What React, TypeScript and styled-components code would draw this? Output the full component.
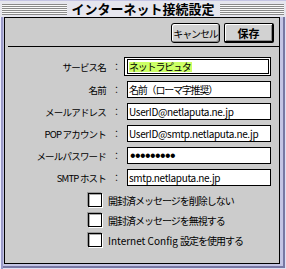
import React from "react";
import styled, { createGlobalStyle } from "styled-components";

const GlobalStyle = createGlobalStyle`
  html, body { margin: 0; padding: 0; background: #c4c4e4; }
  body { font-family: "Noto Sans CJK JP", "Noto Sans", sans-serif; color: #000; }
`;

const Window = styled.div`
  width: 286px;
  height: 269px;
  box-sizing: border-box;
  display: flex;
  flex-direction: column;
  background: #c4c4e4;
  box-shadow: inset 1px 1px 0 #ececff, inset -1px -1px 0 #e0e0f4, inset -3px -3px 0 #7878a4;
`;

const TitleBar = styled.div`
  height: 17px;
  display: flex;
  align-items: center;
  gap: 5px;
  padding: 0 2px;
  background: #e6e6ee;
  box-shadow: inset 0 1px 0 #c4c4e4;
`;

const Stripes = styled.div`
  flex: 1;
  height: 11px;
  margin-top: 2px;
  background: repeating-linear-gradient(to bottom, #8a8a8a 0 1px, #fafafa 1px 2px);
`;

const TitleText = styled.div`
  font-size: 13px;
  font-weight: 700;
  line-height: 16px;
  white-space: nowrap;
`;

const Frame = styled.div`
  flex: 1;
  display: flex;
  padding: 0 6px 5px 4px;
  box-shadow: inset 1px 0 0 #ececff, inset 3px 0 0 #9a9ac8;
`;

const Dialog = styled.div`
  flex: 1;
  display: flex;
  flex-direction: column;
  border: 1px solid #000;
  background: #cccccc;
`;

const Toolbar = styled.div`
  display: flex;
  justify-content: flex-end;
  gap: 4px;
  padding: 5px 5px 0 0;
`;

const Button = styled.div<{ $default?: boolean; $width: number }>`
  box-sizing: border-box;
  width: ${p => p.$width}px;
  height: 20px;
  display: flex;
  align-items: center;
  justify-content: center;
  background: #d2d2d2;
  border: 1px solid #000;
  border-right-width: ${p => (p.$default ? 2 : 1)}px;
  border-bottom-width: ${p => (p.$default ? 2 : 1)}px;
  border-radius: ${p => (p.$default ? 2 : 3)}px;
  box-shadow: inset 1px 1px 0 #fff, inset -1px -1px 0 #8c8c8c;
  font-size: ${p => (p.$default ? 11 : 10)}px;
  font-weight: ${p => (p.$default ? 700 : 400)};
  letter-spacing: ${p => (p.$default ? 0 : -1.1)}px;
  white-space: nowrap;
`;

const Separator = styled.div`
  height: 1px;
  background: #000;
  margin: 3px 0 0 3px;
`;

const Form = styled.div`
  display: grid;
  grid-template-columns: 101px 21px 144px;
  grid-template-rows: 19px repeat(5, 17px);
  row-gap: 5px;
  align-items: center;
  margin-top: 10px;
`;

const Label = styled.div`
  text-align: right;
  font-size: 9.5px;
  letter-spacing: -0.8px;
  white-space: nowrap;
`;

const Colon = styled.div`
  text-align: center;
  font-size: 9px;
`;

const FocusRing = styled.div`
  box-sizing: border-box;
  height: 19px;
  width: 147px;
  margin-left: -3px;
  border: 1px solid #000;
  padding: 1px 1px 1px 2px;
  background: #fff;
  display: flex;
`;

const Field = styled.div<{ $cjk?: boolean; $height?: number }>`
  box-sizing: border-box;
  flex: 1;
  height: ${p => p.$height ?? 17}px;
  border: 1px solid #000;
  background: #fff;
  padding-left: 1px;
  display: flex;
  align-items: center;
  font-size: 10px;
  letter-spacing: ${p => (p.$cjk ? -1.2 : -0.35)}px;
  white-space: nowrap;
  overflow: hidden;
`;

const Selection = styled.span`
  background: #ccff66;
  line-height: 10px;
  padding: 0 1px 0 0;
`;

const Dots = styled.span`
  font-family: "Liberation Sans", sans-serif;
  font-size: 16px;
  line-height: 14px;
  letter-spacing: -0.6px;
  margin-left: 1px;
`;

const CheckList = styled.div`
  display: flex;
  flex-direction: column;
  gap: 6px;
  margin-top: 7px;
  padding-left: 83px;
`;

const CheckRow = styled.div`
  display: flex;
  align-items: center;
  gap: 6px;
  height: 14px;
`;

const CheckBox = styled.div`
  box-sizing: border-box;
  width: 14px;
  height: 14px;
  border: 1px solid #000;
  background: #fff;
  box-shadow: inset 1px 1px 0 #aaa, 1px 1px 0 #fff, -1px -1px 0 #999;
`;

const CheckText = styled.span`
  font-size: 10px;
  letter-spacing: -1px;
  white-space: nowrap;
`;

const Latin = styled.span`
  letter-spacing: 0;
`;

type Row = { label: React.ReactNode; value: string; cjk?: boolean };

const rows: Row[] = [
  { label: "名前", value: "名前（ローマ字推奨）", cjk: true },
  { label: "メールアドレス", value: "UserID@netlaputa.ne.jp" },
  { label: "POP アカウント", value: "UserID@smtp.netlaputa.ne.jp" },
  { label: "メールパスワード", value: "" },
  { label: "SMTP ホスト", value: "smtp.netlaputa.ne.jp" },
];

const checks: React.ReactNode[] = [
  "開封済メッセージを削除しない",
  "開封済メッセージを無視する",
  <><Latin>Internet Config </Latin>設定を使用する</>,
];

export default function App() {
  return (
    <>
      <GlobalStyle />
      <Window>
        <TitleBar>
          <Stripes />
          <TitleText>インターネット接続設定</TitleText>
          <Stripes />
        </TitleBar>
        <Frame>
          <Dialog>
            <Toolbar>
              <Button $width={49}>キャンセル</Button>
              <Button $width={50} $default>保存</Button>
            </Toolbar>
            <Separator />
            <Form>
              <Label>サービス名</Label>
              <Colon>：</Colon>
              <FocusRing>
                <Field $cjk $height={15}>
                  <Selection>ネットラピュタ</Selection>
                </Field>
              </FocusRing>
              {rows.map((r, i) => (
                <React.Fragment key={i}>
                  <Label>{r.label}</Label>
                  <Colon>：</Colon>
                  <Field $cjk={r.cjk}>
                    {r.value || <Dots>•••••••••</Dots>}
                  </Field>
                </React.Fragment>
              ))}
            </Form>
            <CheckList>
              {checks.map((c, i) => (
                <CheckRow key={i}>
                  <CheckBox />
                  <CheckText>{c}</CheckText>
                </CheckRow>
              ))}
            </CheckList>
          </Dialog>
        </Frame>
      </Window>
    </>
  );
}
